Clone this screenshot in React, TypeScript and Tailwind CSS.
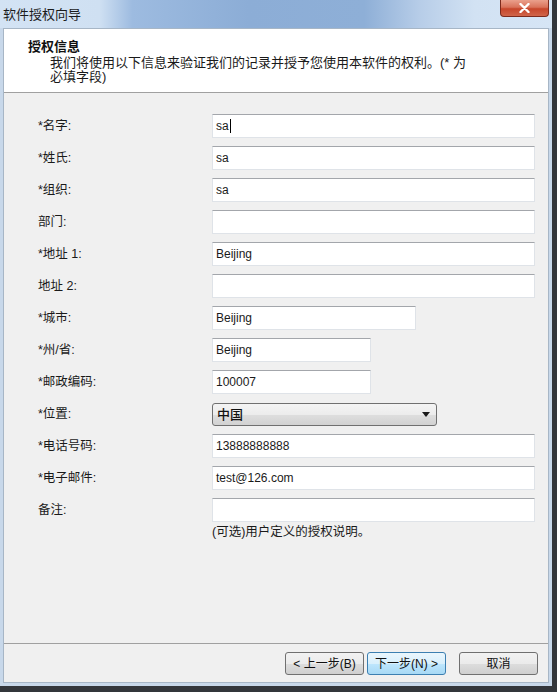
import React from 'react'

type Field = {
  label: string
  value?: string
  w: string
  caret?: boolean
  select?: boolean
}

const fields: Field[] = [
  { label: '*名字:', value: 'sa', w: 'w-[323px]', caret: true },
  { label: '*姓氏:', value: 'sa', w: 'w-[323px]' },
  { label: '*组织:', value: 'sa', w: 'w-[323px]' },
  { label: '部门:', value: '', w: 'w-[323px]' },
  { label: '*地址 1:', value: 'Beijing', w: 'w-[323px]' },
  { label: '地址 2:', value: '', w: 'w-[323px]' },
  { label: '*城市:', value: 'Beijing', w: 'w-[204px]' },
  { label: '*州/省:', value: 'Beijing', w: 'w-[159px]' },
  { label: '*邮政编码:', value: '100007', w: 'w-[159px]' },
  { label: '*位置:', value: '中国', w: 'w-[225px]', select: true },
  { label: '*电话号码:', value: '13888888888', w: 'w-[323px]' },
  { label: '*电子邮件:', value: 'test@126.com', w: 'w-[323px]' },
  { label: '备注:', value: '', w: 'w-[323px]' },
]

function TextBox({ f }: { f: Field }) {
  if (f.select) {
    return (
      <div
        className={`${f.w} flex h-[23px] items-center justify-between rounded-[3px] border border-[#707070] bg-[linear-gradient(180deg,#f4f4f4_0%,#ececec_50%,#dedede_51%,#d2d2d2_100%)] pl-[4px] pr-[6px]`}
      >
        <span className="text-[13px] font-medium leading-none text-[#111]">{f.value}</span>
        <svg width="8" height="5" viewBox="0 0 8 5">
          <path d="M0 0 H8 L4 5 Z" fill="#1a1a1a" />
        </svg>
      </div>
    )
  }
  return (
    <div
      className={`${f.w} flex h-[24px] items-center border border-[#dfe3e8] border-t-[#a3a6ab] bg-white pl-[3px] text-[12px] leading-none text-[#1a1a1a]`}
    >
      {f.value}
      {f.caret && <span className="ml-px inline-block h-[14px] w-px bg-black" />}
    </div>
  )
}

function WinButton({ label, focused }: { label: string; focused?: boolean }) {
  return (
    <button
      className={`flex h-[23px] w-[79px] items-center justify-center rounded-[3px] border text-[12px] leading-none text-[#111] ${
        focused
          ? 'border-[#3c7fb1] bg-[linear-gradient(180deg,#eaf6fd_0%,#d9f0fc_50%,#bee6fd_51%,#a7d9f5_100%)]'
          : 'border-[#707070] bg-[linear-gradient(180deg,#f2f2f2_0%,#ebebeb_50%,#dddddd_51%,#cfcfcf_100%)]'
      }`}
    >
      {label}
    </button>
  )
}

export default function App() {
  return (
    <div className="h-[692px] w-[557px] overflow-hidden bg-[#33363b] font-['Liberation_Sans','Noto_Sans_CJK_SC',sans-serif]">
      <div className="flex h-[686px] w-[552px] flex-col bg-[#c8d8ea]">
        {/* title bar */}
        <div className="relative flex h-[28px] items-center bg-[linear-gradient(90deg,#d3e3f4_0%,#cfe0f2_18%,#9dbbe0_24%,#8cadd6_45%,#8eafd7_66%,#b7cde8_76%,#d2e2f3_86%,#d6e5f5_100%)] pl-[3px]">
          <span className="text-[13px] leading-none text-[#1b1b1b]">软件授权向导</span>
          <div className="absolute right-[3px] top-0 flex h-[17px] w-[49px] items-center justify-center rounded-b-[4px] border border-t-0 border-[#7d2a1c] bg-[linear-gradient(180deg,#eaa08c_0%,#d9735b_45%,#c7462b_55%,#d0654a_100%)]">
            <svg width="11" height="10" viewBox="0 0 11 10">
              <path d="M1.5 1 L9.5 9 M9.5 1 L1.5 9" stroke="white" strokeWidth="2.4" strokeLinecap="round" />
            </svg>
          </div>
        </div>

        {/* body */}
        <div className="mx-[3px] mb-[3px] flex flex-1 flex-col border border-[#a7b6c6] bg-[#f0f0f0]">
          <div className="h-[64px] border-b border-[#a0a0a0] bg-white pl-[24px] pt-[10px]">
            <div className="text-[13px] font-bold leading-[16px] text-[#111]">授权信息</div>
            <div className="pl-[22px] pt-[1px] text-[13px] leading-[14px] text-[#1a1a1a]">
              我们将使用以下信息来验证我们的记录并授予您使用本软件的权利。(* 为
              <br />
              必填字段)
            </div>
          </div>

          <div className="flex-1 pl-[34px] pt-[21px]">
            <div className="grid grid-cols-[174px_1fr] gap-y-[8px]">
              {fields.map((f) => (
                <React.Fragment key={f.label}>
                  <div className="flex h-[24px] items-center text-[12.5px] leading-none text-[#1a1a1a]">{f.label}</div>
                  <div className="flex h-[24px] items-center">
                    <TextBox f={f} />
                  </div>
                </React.Fragment>
              ))}
              <div />
              <div className="-mt-[6px] text-[12.5px] leading-[16px] text-[#1a1a1a]">(可选)用户定义的授权说明。</div>
            </div>
          </div>

          <div className="flex h-[39px] items-start justify-end border-t border-[#a0a0a0] pr-[10px] pt-[8px]">
            <WinButton label="< 上一步(B)" />
            <div className="ml-[3px]">
              <WinButton label="下一步(N) >" focused />
            </div>
            <div className="ml-[13px]">
              <WinButton label="取消" />
            </div>
          </div>
        </div>
      </div>
    </div>
  )
}
